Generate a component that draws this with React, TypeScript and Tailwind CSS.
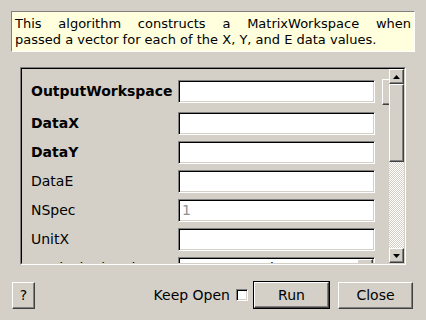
import React from 'react';

const font = { fontFamily: '"DejaVu Sans", "Liberation Sans", sans-serif' };

type Row = { label: string; bold?: boolean; value?: string; combo?: boolean };

const rows: Row[] = [
  { label: 'OutputWorkspace', bold: true },
  { label: 'DataX', bold: true },
  { label: 'DataY', bold: true },
  { label: 'DataE' },
  { label: 'NSpec', value: '1' },
  { label: 'UnitX' },
  { label: 'VerticalAxisUnit', value: 'SpectraNumber', combo: true },
  { label: 'VerticalAxisValues' },
];

// classic raised / sunken bevels
const raised =
  'border border-t-white border-l-white border-b-[#404040] border-r-[#404040] shadow-[inset_-1px_-1px_0_#808080]';
const sunken =
  'border border-t-[#808080] border-l-[#808080] border-b-white border-r-white shadow-[inset_1px_1px_0_#000,inset_-1px_-1px_0_#d4d0c8]';

function Arrow({ down }: { down?: boolean }) {
  return (
    <svg width="7" height="4" viewBox="0 0 7 4">
      <path d={down ? 'M0 0h7L3.5 4z' : 'M0 4h7L3.5 0z'} fill="#000" />
    </svg>
  );
}

function Field({ row }: { row: Row }) {
  if (row.combo) {
    return (
      <div className={`w-[197px] h-[23px] shrink-0 bg-white flex items-center ${sunken}`}>
        <span className="flex-1 pl-[4px] text-[14px]">{row.value}</span>
        <div className={`w-[16px] h-[19px] mr-[1px] bg-[#d4d0c8] flex items-center justify-center ${raised}`}>
          <Arrow down />
        </div>
      </div>
    );
  }
  return (
    <div className={`w-[197px] h-[23px] shrink-0 bg-white flex items-center pl-[3px] text-[14px] text-[#909090] ${sunken}`}>
      {row.value}
    </div>
  );
}

export default function App() {
  return (
    <div className="w-[426px] h-[320px] bg-[#d4d0c8] text-black overflow-hidden" style={font}>
      {/* description */}
      <div className="ml-[11px] mt-[11px] w-[404px] h-[41px] bg-[#ffffdd] border border-t-[#808080] border-l-[#808080] border-b-white border-r-white px-[3px] pt-[4px] text-[13px] leading-[16px]">
        <div className="[text-align-last:justify] text-justify">
          This algorithm constructs a MatrixWorkspace when
        </div>
        <div>passed a vector for each of the X, Y, and E data values.</div>
      </div>

      {/* property list */}
      <div className="ml-[20px] mt-[15px] w-[386px] h-[198px] border border-t-[#808080] border-l-[#808080] border-b-white border-r-white">
        <div className="w-full h-full flex border border-t-black border-l-black border-b-[#d4d0c8] border-r-[#d4d0c8]">
          <div className="flex-1 overflow-hidden pt-[10px] pl-[9px] flex flex-col gap-[6px]">
            {rows.map((row, i) => (
              <div key={row.label} className={`flex shrink-0 ${i === 0 ? 'h-[27px] items-start' : 'h-[23px] items-center'}`}>
                <div
                  className={`w-[147px] shrink-0 text-[14px] whitespace-nowrap ${row.bold ? 'font-bold' : ''} ${i === 0 ? 'h-[25px] flex items-center' : ''}`}
                >
                  {row.label}
                </div>
                <div className={i === 0 ? 'mt-[1px]' : ''}>
                  <Field row={row} />
                </div>
                {i === 0 && <div className={`ml-[7px] w-[24px] h-[26px] shrink-0 bg-[#d4d0c8] ${raised}`} />}
              </div>
            ))}
          </div>

          {/* scrollbar */}
          <div className="w-[15px] flex flex-col bg-[repeating-conic-gradient(#d4d0c8_0%_25%,#ffffff_0%_50%)] bg-[length:2px_2px]">
            <div className={`h-[15px] bg-[#d4d0c8] flex items-center justify-center ${raised}`}>
              <Arrow />
            </div>
            <div className={`h-[78px] bg-[#d4d0c8] ${raised}`} />
            <div className="flex-1" />
            <div className={`h-[15px] bg-[#d4d0c8] flex items-center justify-center ${raised}`}>
              <Arrow down />
            </div>
          </div>
        </div>
      </div>

      {/* buttons */}
      <div className="mt-[16px] flex items-center pl-[12px] pr-[13px] text-[14px]">
        <button className={`w-[23px] h-[27px] bg-[#d4d0c8] flex items-center justify-center ${raised}`}>?</button>
        <div className="flex-1" />
        <span>Keep Open</span>
        <div className={`ml-[6px] w-[12px] h-[12px] bg-white ${sunken}`} />
        <button className="ml-[5px] w-[77px] h-[28px] border border-black">
          <div className={`w-full h-full bg-[#d4d0c8] flex items-center justify-center ${raised}`}>Run</div>
        </button>
        <button className={`ml-[8px] w-[75px] h-[27px] bg-[#d4d0c8] flex items-center justify-center ${raised}`}>Close</button>
      </div>
    </div>
  );
}
